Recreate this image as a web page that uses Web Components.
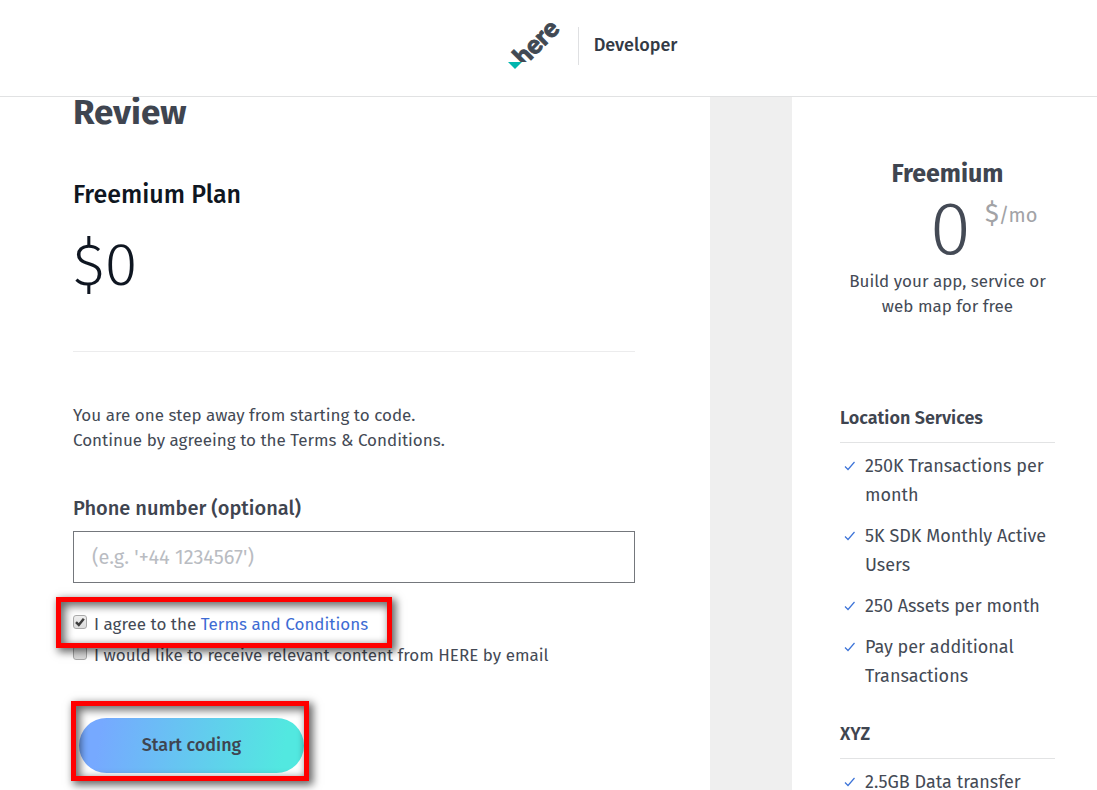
<!DOCTYPE html>
<html lang="en">
<head>
<meta charset="utf-8">
<meta name="viewport" content="width=device-width, initial-scale=1">
<title>HERE Developer - Review</title>
<style>
html, body { margin: 0; height: 100%; }
body { font-family: "Fira Sans", "Noto Sans", sans-serif; font-size: 17px; font-weight: 400; line-height: 25px; color: #444a55; background: #fff; overflow: hidden; }
</style>
</head>
<body>
<signup-page></signup-page>
<script>
const define = (name, html, setup) => {
  const template = document.createElement('template');
  template.innerHTML = html;
  customElements.define(name, class extends HTMLElement {
    constructor() {
      super();
      this.attachShadow({ mode: 'open' }).append(template.content.cloneNode(true));
      if (setup) setup(this, this.shadowRoot);
    }
  });
};

define('here-logo', `
<style>
:host { display: block; }
svg { display: block; overflow: visible; }
</style>
<svg width="56" height="56" viewBox="506 17 56 56" role="img" aria-label="here">
  <text transform="translate(524 66) rotate(-45)" font-family="Lato, sans-serif" font-weight="900" font-size="26" fill="#414953" stroke="#414953" stroke-width="0.900">here</text>
  <path d="M506 61H534V73H506Z" fill="#fff"/>
  <path d="M508 61H522L515 68Z" fill="#00b5ad"/>
</svg>`);

define('site-header', `
<style>
:host { display: flex; flex: none; position: relative; z-index: 1; box-sizing: border-box; height: 97px; padding: 0 0 5px 86px; align-items: center; justify-content: center; background: #fff; border-bottom: 1px solid #e1e2e3; }
.rule { width: 1px; height: 38px; margin: 0 15px 0 16px; background: #dfe0e2; }
a { color: #333a45; font-size: 18px; font-weight: 500; text-decoration: none; }
</style>
<here-logo></here-logo><span class="rule"></span><a href="#">Developer</a>`);

define('focus-frame', `
<style>
:host { display: block; position: relative; width: fit-content; }
.frame { position: absolute; z-index: 1; inset: var(--frame-inset); border: 5px solid #f00; pointer-events: none;
  box-shadow: 3px 3px 8px 1px rgba(0,0,0,.6), inset 3px 3px 8px 1px rgba(0,0,0,.6); }
</style>
<slot></slot><div class="frame"></div>`);

define('check-row', `
<style>
:host { display: block; }
label { display: flex; align-items: center; gap: 7px; line-height: 31px; }
input { appearance: none; flex: none; box-sizing: border-box; width: 14px; height: 14px; margin: 0 0 5px; border: 1px solid #a9a9a9; border-radius: 3px; background: linear-gradient(#eee, #dcdcdc); }
.box { position: relative; display: flex; }
svg { position: absolute; left: 0; top: 0; display: none; pointer-events: none; }
input:checked + svg { display: block; }
</style>
<label><span class="box"><input type="checkbox"><svg width="14" height="14" viewBox="0 0 14 14"><path d="M3 7.200L5.800 10L10.800 3.800" fill="none" stroke="#3d3d3d" stroke-width="2.500"/></svg></span><span><slot></slot></span></label>`,
(host, root) => { root.querySelector('input').checked = host.hasAttribute('checked'); });

define('phone-field', `
<style>
:host { display: block; }
label { display: block; font-size: 20px; font-weight: 500; line-height: 26px; margin-bottom: 10px; color: #3f4550; }
input { display: block; box-sizing: border-box; width: 100%; height: 52px; padding: 0 18px; border: 1px solid #74777c; border-radius: 0; background: #fff; font: inherit; font-size: 20px; color: inherit; }
input::placeholder { color: #b9bcc2; opacity: 1; }
</style>
<label for="phone">Phone number (optional)</label>
<input id="phone" type="tel" placeholder="(e.g. '+44 1234567')">`);

define('review-form', `
<style>
:host { display: block; padding: 0 75px 0 73px; }
h1 { margin: 0; font-size: 35px; font-weight: 700; line-height: 30px; color: #3f4550; }
h2 { margin: 50px 0 0; font-size: 25px; font-weight: 500; line-height: 36px; color: #0f1621; }
.price { margin: 10px 0 0; font-size: 60px; font-weight: 300; line-height: 84px; color: #0f1621; }
hr { margin: 44px 0 51px; border: 0; border-top: 1px solid #ececed; }
p { margin: 0; }
phone-field { margin: 42px 0 26px; }
a { color: #3d6bd3; text-decoration: none; }
.agree { --frame-inset: -12px -17px -8px -17px; min-width: 302px; }
.start { --frame-inset: -17px -5px -8px -8px; margin: 47px 0 0 6px; }
button { display: block; width: 225px; height: 55px; padding: 0; border: 0; border-radius: 28px; background: linear-gradient(100deg, #76a9ff 10%, #52e8e0 90%); font: inherit; font-size: 18px; font-weight: 500; color: #3f4550; }
</style>
<h1>Review</h1>
<h2>Freemium Plan</h2>
<div class="price">$0</div>
<hr>
<p>You are one step away from starting to code.<br>Continue by agreeing to the Terms &amp; Conditions.</p>
<phone-field></phone-field>
<focus-frame class="agree"><check-row checked>I agree to the <a href="#">Terms and Conditions</a></check-row></focus-frame>
<check-row>I would like to receive relevant content from HERE by email</check-row>
<focus-frame class="start"><button type="button">Start coding</button></focus-frame>`);

define('feature-item', `
<style>
:host { display: flex; gap: 10px; margin-bottom: 12px; padding-left: 4px; font-size: 18px; line-height: 29px; }
svg { flex: none; margin-top: 9px; }
</style>
<svg width="11" height="10" viewBox="0 0 11 10"><path d="M1 5.500L4 8.500L10.500 1" fill="none" stroke="#3d74d8" stroke-width="1.200"/></svg><span><slot></slot></span>`);

define('feature-group', `
<style>
:host { display: block; }
h3 { margin: 0 0 9px; padding-bottom: 12px; border-bottom: 1px solid #e2e3e4; font-size: 18px; font-weight: 600; line-height: 24px; color: #3f4550; }
</style>
<h3><slot name="title"></slot></h3><slot></slot>`);

define('plan-summary', `
<style>
:host { display: block; padding: 62px 42px 0 48px; }
.intro { text-align: center; height: 247px; }
h2 { margin: 0; font-size: 25px; font-weight: 700; line-height: 30px; color: #3f4550; }
.cost { display: flex; justify-content: center; gap: 14px; padding-left: 72px; height: 80px; }
.amount { font-size: 75px; font-weight: 300; line-height: 80px; }
.unit { display: flex; align-items: baseline; font-size: 20px; line-height: 50px; color: #a2a3a6; }
.unit b { font-size: 26px; font-weight: 400; }
feature-group { margin-bottom: 31px; }
</style>
<div class="intro">
  <h2>Freemium</h2>
  <div class="cost"><span class="amount">0</span><span class="unit"><b>$</b>/mo</span></div>
  <div>Build your app, service or<br>web map for free</div>
</div>
<feature-group><span slot="title">Location Services</span>
  <feature-item>250K Transactions per month</feature-item>
  <feature-item>5K SDK Monthly Active Users</feature-item>
  <feature-item>250 Assets per month</feature-item>
  <feature-item>Pay per additional Transactions</feature-item>
</feature-group>
<feature-group><span slot="title">XYZ</span>
  <feature-item>2.5GB Data transfer</feature-item>
</feature-group>`);

define('signup-page', `
<style>
:host { display: flex; flex-direction: column; height: 100vh; overflow: hidden; }
main { flex: 1; min-height: 0; display: grid; grid-template-columns: minmax(0, 1fr) 305px; column-gap: 82px; background: #efefef; }
review-form, plan-summary { background: #fff; }
</style>
<site-header></site-header>
<main><review-form></review-form><plan-summary></plan-summary></main>`);
</script>
</body>
</html>
